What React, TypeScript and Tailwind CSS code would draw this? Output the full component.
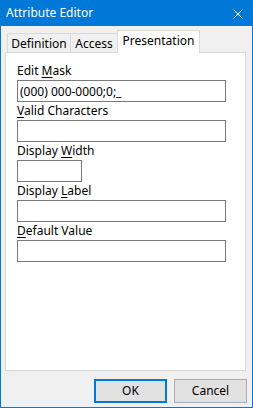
import { useState } from "react"

const fields = [
  { before: "Edit ", key: "M", after: "ask", value: "(000) 000-0000;0;_", narrow: false },
  { before: "", key: "V", after: "alid Characters", value: "", narrow: false },
  { before: "Display ", key: "W", after: "idth", value: "", narrow: true },
  { before: "Display ", key: "L", after: "abel", value: "", narrow: false },
  { before: "", key: "D", after: "efault Value", value: "", narrow: false },
]

const tabs = [
  { name: "Definition", w: "w-[64px]" },
  { name: "Access", w: "w-[48px]" },
  { name: "Presentation", w: "w-[83px]" },
]

export default function App() {
  const [active, setActive] = useState("Presentation")

  return (
    <div className="w-[253px] h-[408px] border border-[#0078d7] bg-[#f0f0f0] flex flex-col font-['Noto_Sans',sans-serif] text-[12px] text-black">
      {/* title bar */}
      <div className="h-[26px] -mt-px bg-[#0078d7] flex items-center justify-between pl-[5px] pr-[9px] text-white">
        <span className="leading-none">Attribute Editor</span>
        <svg width="10" height="10" viewBox="0 0 10 10" className="mt-[1px]">
          <path d="M0.5 0.5 L9.5 9.5 M9.5 0.5 L0.5 9.5" stroke="white" strokeWidth="1" fill="none" />
        </svg>
      </div>

      <div className="flex-1 flex flex-col pt-[4px] pl-[4px] pr-[6px]">
        {/* tabs */}
        <div className="h-[22px] flex items-end pl-[2px]">
          {tabs.map((t) =>
            t.name === active ? (
              <button
                key={t.name}
                onClick={() => setActive(t.name)}
                className={`relative z-10 -mb-px -ml-px ${t.w} h-[23px] pb-[3px] bg-white border border-b-0 border-[#d9d9d9] leading-none`}
              >
                {t.name}
              </button>
            ) : (
              <button
                key={t.name}
                onClick={() => setActive(t.name)}
                className={`${t.w} h-[19px] pt-[1px] bg-[#f0f0f0] border border-b-0 border-[#d9d9d9] -ml-px first:ml-0 leading-none`}
              >
                {t.name}
              </button>
            )
          )}
        </div>

        {/* panel */}
        <div className="flex-1 bg-white border border-[#d9d9d9] pt-[9px] pl-[11px]">
          {fields.map((f, i) => (
            <div key={i} className="flex flex-col">
              <label className="h-[18px] leading-[18px]">
                {f.before}
                <u className="underline-offset-[2px]">{f.key}</u>
                {f.after}
              </label>
              <input
                defaultValue={f.value}
                className={`h-[22px] ${f.narrow ? "w-[65px]" : "w-[209px]"} border border-[#7a7a7a] px-[2px] outline-none`}
              />
            </div>
          ))}
        </div>

        {/* buttons */}
        <div className="flex justify-end gap-[7px] mt-[8px] mb-[4px] -mr-[1px]">
          <button className="w-[73px] h-[24px] bg-[#e1e1e1] border-2 border-[#0078d7]">OK</button>
          <button className="w-[73px] h-[24px] bg-[#e1e1e1] border border-[#adadad]">Cancel</button>
        </div>
      </div>
    </div>
  )
}
